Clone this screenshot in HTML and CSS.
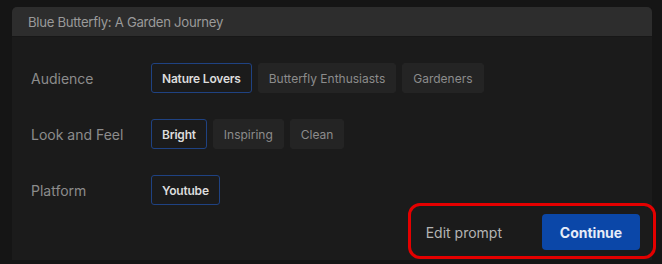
FILE: index.html
```html
<!DOCTYPE html>
<html>
<head>
<meta charset="utf-8">
<link rel="stylesheet" href="styles.css">
</head>
<body>
<div class="card">
  <div class="card-header">Blue Butterfly: A Garden Journey</div>
  <div class="card-body">
    <div class="row">
      <div class="label">Audience</div>
      <div class="chips">
        <span class="chip selected">Nature Lovers</span>
        <span class="chip">Butterfly Enthusiasts</span>
        <span class="chip">Gardeners</span>
      </div>
    </div>
    <div class="row">
      <div class="label">Look and Feel</div>
      <div class="chips">
        <span class="chip selected">Bright</span>
        <span class="chip">Inspiring</span>
        <span class="chip">Clean</span>
      </div>
    </div>
    <div class="row">
      <div class="label">Platform</div>
      <div class="chips">
        <span class="chip selected">Youtube</span>
      </div>
    </div>
    <div class="footer">
      <span class="edit">Edit prompt</span>
      <span class="continue">Continue</span>
      <div class="highlight"></div>
    </div>
  </div>
</div>
</body>
</html>
```

FILE: styles.css
```css
html, body {
  margin: 0;
  padding: 0;
  background: #151515;
  font-family: Inter, "Noto Sans", sans-serif;
}
.card {
  margin: 7px 0 0 12px;
  width: 640px;
  height: 253px;
  background: #1b1b1b;
  border-radius: 5px 5px 0 0;
  display: flex;
  flex-direction: column;
}
.card-header {
  height: 30px;
  background: #2d2d2d;
  border-radius: 5px 5px 0 0;
  border-bottom: 1px solid #171717;
  box-sizing: border-box;
  padding-left: 16px;
  display: flex;
  align-items: center;
  font-size: 13.2px;
  letter-spacing: -0.3px;
  color: #9a9a9a;
}
.card-body {
  padding: 26px 12px 10px 19px;
  display: flex;
  flex-direction: column;
  gap: 26px;
}
.row {
  display: flex;
  align-items: center;
  height: 30px;
}
.label {
  width: 120px;
  font-size: 14px;
  color: #8c8c8c;
}
.chips {
  display: flex;
  gap: 6px;
}
.chip {
  height: 30px;
  box-sizing: border-box;
  padding: 0 10px;
  display: flex;
  align-items: center;
  font-size: 12px;
  color: #8c8c8c;
  background: #242424;
  border: 1px solid #242424;
  border-radius: 3px;
}
.chip.selected {
  background: #1b1b1b;
  border-color: #1f4282;
  color: #dcdcdc;
  font-weight: 600;
  letter-spacing: -0.2px;
}
.footer {
  position: relative;
  margin-top: -17px;
  display: flex;
  justify-content: flex-end;
  align-items: center;
  gap: 40px;
}
.edit {
  font-size: 14px;
  color: #b4b4b4;
}
.continue {
  width: 98px;
  height: 36px;
  display: flex;
  align-items: center;
  justify-content: center;
  background: #0b47a8;
  border-radius: 4px;
  color: #e6ecf8;
  font-size: 14px;
  font-weight: 700;
}
.highlight {
  position: absolute;
  left: 377px;
  top: -11px;
  width: 248px;
  height: 56px;
  box-sizing: border-box;
  border: 3px solid #e40000;
  border-radius: 12px;
}
```
